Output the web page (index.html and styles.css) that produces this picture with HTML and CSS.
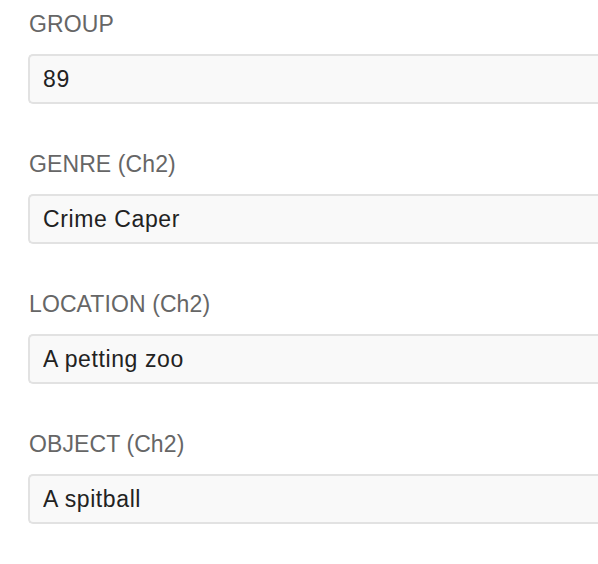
FILE: index.html
```html
<!DOCTYPE html>
<html lang="en">
<head>
<meta charset="utf-8">
<title>Form</title>
<link rel="stylesheet" href="styles.css">
</head>
<body>
<form class="form">
  <div class="field">
    <label class="label" for="group">GROUP</label>
    <input class="input" id="group" type="text" value="89" readonly>
  </div>
  <div class="field">
    <label class="label" for="genre">GENRE (Ch2)</label>
    <input class="input" id="genre" type="text" value="Crime Caper" readonly>
  </div>
  <div class="field">
    <label class="label" for="location">LOCATION (Ch2)</label>
    <input class="input" id="location" type="text" value="A petting zoo" readonly>
  </div>
  <div class="field">
    <label class="label" for="object">OBJECT (Ch2)</label>
    <input class="input" id="object" type="text" value="A spitball" readonly>
  </div>
</form>
</body>
</html>
```
FILE: styles.css
```css
html, body {
  margin: 0;
  padding: 0;
  background: #ffffff;
  overflow: hidden;
}
body {
  font-family: "Liberation Sans", Arial, sans-serif;
}
.form {
  display: flex;
  flex-direction: column;
  gap: 46px;
  padding: 10px 0 0 28px;
}
.field {
  display: flex;
  flex-direction: column;
  gap: 16px;
}
.label {
  display: block;
  font-size: 23px;
  line-height: 28px;
  color: #666666;
  padding-left: 1px;
  letter-spacing: 0.1px;
}
.input {
  box-sizing: border-box;
  width: 100%;
  height: 50px;
  margin: 0;
  padding: 0 13px;
  border: 2px solid #e2e2e2;
  border-right: none;
  border-radius: 5px 0 0 5px;
  background: #f9f9f9;
  font-family: "Liberation Sans", Arial, sans-serif;
  font-size: 23px;
  letter-spacing: 0.6px;
  color: #222222;
  outline: none;
}
```
